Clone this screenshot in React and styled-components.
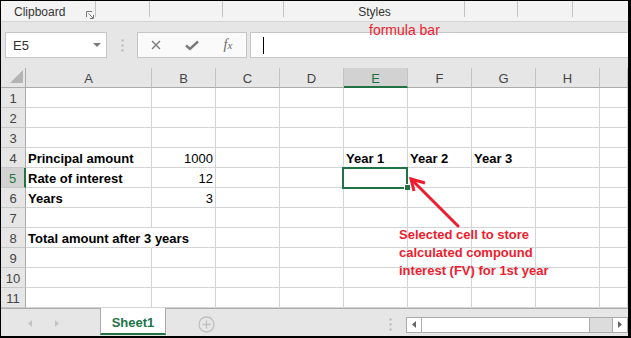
import React from 'react';
import styled, { createGlobalStyle } from 'styled-components';

const GREEN = '#217346';
const RED = '#ee1c2e';

const GlobalStyle = createGlobalStyle`
  body {
    margin: 0;
    font-family: 'Liberation Sans', Arial, sans-serif;
    background: #fff;
  }
`;

const Frame = styled.div`
  position: relative;
  width: 631px;
  height: 338px;
  box-sizing: border-box;
  border-style: solid;
  border-color: #000;
  border-width: 1px 3px 2px 1px;
  overflow: hidden;
  display: flex;
  flex-direction: column;
  background: #fff;
`;

/* ribbon bottom strip */
const Ribbon = styled.div`
  display: flex;
  height: 20px;
  background: #f3f3f3;
  border-bottom: 1px solid #d4d4d4;
`;

const Group = styled.div`
  box-sizing: border-box;
  width: ${(p) => (p.w ? `${p.w}px` : 'auto')};
  flex: ${(p) => (p.w ? 'none' : '1')};
  display: flex;
  justify-content: ${(p) => (p.left ? 'flex-start' : 'center')};
  align-items: flex-start;
  padding: 2px 0 0 ${(p) => (p.left ? '13px' : '0')};
  font-size: 12px;
  line-height: 18px;
  color: #333;
  background: ${(p) =>
    p.last ? 'none' : 'linear-gradient(#c3c3c3, #c3c3c3) right top / 1px 16px no-repeat'};
`;

const Launcher = styled.svg`
  margin: 8px 0 0 21px;
`;

/* formula bar */
const FormulaStrip = styled.div`
  display: flex;
  align-items: flex-start;
  height: 46px;
  box-sizing: border-box;
  padding: 10px 0 0 4px;
  background: #e6e6e6;
`;

const NameBox = styled.div`
  width: 102px;
  height: 26px;
  box-sizing: border-box;
  display: flex;
  align-items: center;
  padding: 0 5px 0 7px;
  background: #fff;
  border: 1px solid #c6c6c6;
  font-size: 13px;
  color: #333;
  svg {
    margin-left: auto;
  }
`;

const Grip = styled.div`
  width: 30px;
  height: 26px;
  display: flex;
  align-items: center;
  justify-content: center;
`;

const FxBox = styled.div`
  width: 110px;
  height: 26px;
  box-sizing: border-box;
  display: flex;
  background: #fafafa;
  border: 1px solid #c6c6c6;
`;

const FxSlot = styled.div`
  width: 36px;
  display: flex;
  align-items: center;
  justify-content: center;
`;

const Fx = styled.span`
  font-family: 'Liberation Serif', 'Times New Roman', serif;
  font-style: italic;
  font-size: 14px;
  color: #666;
  small {
    font-size: 11px;
  }
`;

const FormulaInput = styled.div`
  flex: 1;
  height: 26px;
  box-sizing: border-box;
  margin-left: 3px;
  display: flex;
  align-items: center;
  padding-left: 12px;
  background: #fff;
  border: 1px solid #c6c6c6;
  border-right: none;
`;

const Caret = styled.div`
  width: 1px;
  height: 17px;
  background: #000;
`;

/* sheet grid */
const Sheet = styled.div`
  display: grid;
  grid-template-columns: 25px 126px repeat(7, 64px) 1fr;
  grid-auto-rows: 20px;
  background: #fff;
`;

const Corner = styled.div`
  box-sizing: border-box;
  background: #e6e6e6;
  border-right: 1px solid #ababab;
  border-bottom: 1px solid #ababab;
`;

const ColHead = styled.div`
  box-sizing: border-box;
  display: flex;
  align-items: center;
  justify-content: center;
  padding-top: ${(p) => (p.active ? '3px' : '2px')};
  font-size: 13px;
  color: ${(p) => (p.active ? GREEN : '#444')};
  background: ${(p) => (p.active ? '#d2d2d2' : '#e6e6e6')};
  border-right: 1px solid #c3c3c3;
  border-bottom: ${(p) => (p.active ? `2px solid ${GREEN}` : '1px solid #ababab')};
`;

const RowHead = styled.div`
  box-sizing: border-box;
  display: flex;
  align-items: center;
  justify-content: center;
  padding-top: 2px;
  font-size: 13px;
  color: ${(p) => (p.active ? GREEN : '#444')};
  background: ${(p) => (p.active ? '#d2d2d2' : '#e6e6e6')};
  border-right: ${(p) => (p.active ? `2px solid ${GREEN}` : '1px solid #ababab')};
  border-bottom: 1px solid #c8c8c8;
`;

const Cell = styled.div`
  box-sizing: border-box;
  position: relative;
  z-index: ${(p) => (p.selected ? 2 : 'auto')};
  display: flex;
  align-items: flex-end;
  justify-content: ${(p) => (p.num ? 'flex-end' : 'flex-start')};
  padding: 0 2px 1px;
  white-space: nowrap;
  font-size: 13px;
  font-weight: ${(p) => (p.num ? 'normal' : 'bold')};
  line-height: 15px;
  color: #000;
  border-right: ${(p) => (p.spill ? '1px solid transparent' : '1px solid #d4d4d4')};
  border-bottom: 1px solid #d4d4d4;

  ${(p) =>
    p.selected &&
    `
    &::before {
      content: '';
      position: absolute;
      left: -2px;
      top: -1px;
      right: -1px;
      bottom: -2px;
      border: 2px solid ${GREEN};
    }
    &::after {
      content: '';
      position: absolute;
      right: -3px;
      bottom: -3px;
      width: 5px;
      height: 5px;
      background: ${GREEN};
      box-shadow: -1px -1px 0 0 #fff;
    }
  `}
`;

/* sheet tabs + scrollbar */
const TabBar = styled.div`
  display: flex;
  height: 28px;
  background: #e6e6e6;
`;

const TabNav = styled.div`
  width: 99px;
  box-sizing: border-box;
  display: flex;
  align-items: center;
  gap: 23px;
  padding: 2px 0 0 27px;
  border-top: 1px solid #ababab;
`;

const SheetTab = styled.div`
  width: 66px;
  box-sizing: border-box;
  display: flex;
  align-items: flex-end;
  justify-content: center;
  padding-bottom: 3px;
  margin-bottom: 1px;
  background: #fff;
  border-left: 1px solid #ababab;
  border-right: 1px solid #ababab;
  border-bottom: 2px solid ${GREEN};
  color: ${GREEN};
  font-size: 13px;
  font-weight: bold;
`;

const TabRest = styled.div`
  flex: 1;
  box-sizing: border-box;
  display: flex;
  align-items: center;
  padding: 4px 0 0 32px;
  border-top: 1px solid #ababab;
`;

const Spacer = styled.div`
  flex: 1;
`;

const ScrollBar = styled.div`
  width: 222px;
  height: 16px;
  box-sizing: border-box;
  margin-left: 14px;
  display: flex;
  background: #dcdcdc;
  border: 1px solid #ababab;
`;

const ScrollBtn = styled.div`
  width: 14px;
  display: flex;
  align-items: center;
  justify-content: center;
  background: #fff;
  border-left: ${(p) => (p.right ? '1px solid #ababab' : 'none')};
  border-right: ${(p) => (p.right ? 'none' : '1px solid #ababab')};
`;

const Thumb = styled.div`
  width: 167px;
  background: #fff;
  border-right: 1px solid #ababab;
`;

/* annotations over the sheet */
const FormulaNote = styled.div`
  position: absolute;
  left: 368px;
  top: 21px;
  font-size: 14px;
  line-height: 16px;
  color: ${RED};
`;

const Callout = styled.div`
  position: absolute;
  left: 398px;
  top: 225px;
  font-size: 13px;
  font-weight: bold;
  line-height: 18px;
  color: ${RED};
`;

const Arrow = styled.svg`
  position: absolute;
  left: 404px;
  top: 171px;
`;

const cols = ['A', 'B', 'C', 'D', 'E', 'F', 'G', 'H', ''];

const data = {
  4: { A: 'Principal amount', B: '1000', E: 'Year 1', F: 'Year 2', G: 'Year 3' },
  5: { A: 'Rate of interest', B: '12' },
  6: { A: 'Years', B: '3' },
  8: { A: 'Total amount after 3 years' },
};

const rows = [1, 2, 3, 4, 5, 6, 7, 8, 9, 10, 11];

function Tri({ dir, color, w = 4, h = 7 }) {
  const pts = dir === 'left' ? `${w},0 ${w},${h} 0,${h / 2}` : `0,0 0,${h} ${w},${h / 2}`;
  return (
    <svg width={w} height={h}>
      <polygon points={pts} fill={color} />
    </svg>
  );
}

function Dots() {
  return (
    <svg width="3" height="13">
      {[1.5, 6.5, 11.5].map((y) => (
        <rect key={y} x="0.5" y={y - 1} width="2" height="2" fill="#b4b4b4" />
      ))}
    </svg>
  );
}

export default function App() {
  return (
    <Frame>
      <GlobalStyle />
      <Ribbon>
        <Group w={95} left>
          Clipboard
          <Launcher width="8" height="8" viewBox="0 0 8 8">
            <path d="M0.5 6 V0.5 H6" stroke="#777" fill="none" />
            <path d="M2.5 2.5 L7 7 M7.5 4 V7.5 H4" stroke="#777" fill="none" />
          </Launcher>
        </Group>
        <Group w={54} />
        <Group w={73} />
        <Group w={61} />
        <Group w={181}>Styles</Group>
        <Group w={53} />
        <Group w={55} />
        <Group last />
      </Ribbon>

      <FormulaStrip>
        <NameBox>
          E5
          <svg width="8" height="4">
            <polygon points="0,0 8,0 4,4" fill="#7a7a7a" />
          </svg>
        </NameBox>
        <Grip>
          <Dots />
        </Grip>
        <FxBox>
          <FxSlot>
            <svg width="10" height="10">
              <path d="M1 1 L9 9 M9 1 L1 9" stroke="#7a7a7a" strokeWidth="1.4" />
            </svg>
          </FxSlot>
          <FxSlot>
            <svg width="14" height="11">
              <path d="M1 5.5 L5 9 L13 1.5" stroke="#7a7a7a" strokeWidth="2.4" fill="none" />
            </svg>
          </FxSlot>
          <FxSlot>
            <Fx>
              f<small>x</small>
            </Fx>
          </FxSlot>
        </FxBox>
        <FormulaInput>
          <Caret />
        </FormulaInput>
      </FormulaStrip>

      <Sheet>
        <Corner>
          <svg width="24" height="19">
            <polygon points="9,15 22,15 22,2" fill="#b4b4b4" />
          </svg>
        </Corner>
        {cols.map((c, i) => (
          <ColHead key={i} active={c === 'E'}>
            {c}
          </ColHead>
        ))}
        {rows.map((r) => (
          <React.Fragment key={r}>
            <RowHead active={r === 5}>{r}</RowHead>
            {cols.map((c, i) => {
              const v = data[r] && data[r][c];
              return (
                <Cell
                  key={i}
                  num={c === 'B'}
                  spill={r === 8 && c === 'A'}
                  selected={r === 5 && c === 'E'}
                >
                  {v}
                </Cell>
              );
            })}
          </React.Fragment>
        ))}
      </Sheet>

      <TabBar>
        <TabNav>
          <Tri dir="left" color="#c4c4c4" />
          <Tri dir="right" color="#c4c4c4" />
        </TabNav>
        <SheetTab>Sheet1</SheetTab>
        <TabRest>
          <svg width="17" height="17">
            <circle cx="8.5" cy="8.5" r="7.5" stroke="#c0c0c0" strokeWidth="1.3" fill="none" />
            <path d="M8.5 4.5 V12.5 M4.5 8.5 H12.5" stroke="#c0c0c0" strokeWidth="1.3" />
          </svg>
          <Spacer />
          <Dots />
          <ScrollBar>
            <ScrollBtn>
              <Tri dir="left" color="#666" w={4} h={7} />
            </ScrollBtn>
            <Thumb />
            <Spacer />
            <ScrollBtn right>
              <Tri dir="right" color="#666" w={4} h={7} />
            </ScrollBtn>
          </ScrollBar>
        </TabRest>
      </TabBar>

      <FormulaNote>formula bar</FormulaNote>
      <Arrow width="60" height="60">
        <path d="M53 54 L7 8" stroke={RED} strokeWidth="3" strokeLinecap="round" />
        <polyline points="20,11 6,7 9,19" stroke={RED} strokeWidth="3" fill="none" />
      </Arrow>
      <Callout>
        Selected cell to store
        <br />
        calculated compound
        <br />
        interest (FV) for 1st year
      </Callout>
    </Frame>
  );
}
